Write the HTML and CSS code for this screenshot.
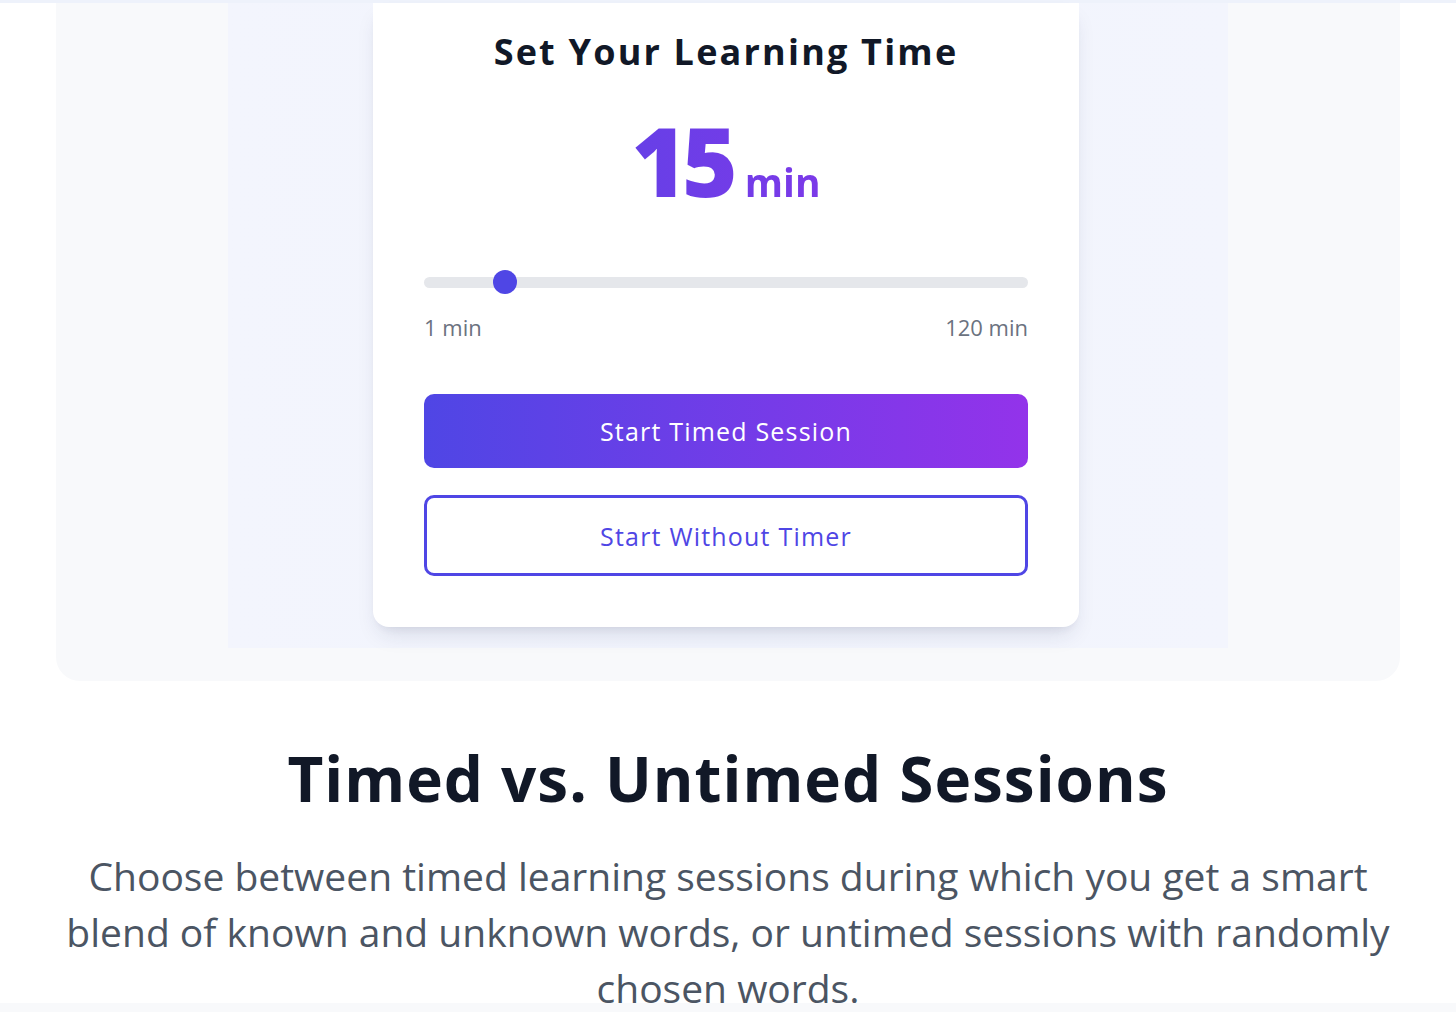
FILE: index.html
```html
<!DOCTYPE html>
<html lang="en">

<head>
    <meta charset="UTF-8">
    <meta name="viewport" content="width=device-width, initial-scale=1.0">
    <title>Learning Time</title>
    <link rel="stylesheet" href="styles.css">
</head>

<body>
    <div class="top-edge"></div>

    <!-- app preview -->
    <div class="preview">
        <div class="glow">
            <div class="card">
                <h2 class="card-title">Set Your Learning Time</h2>
                <div class="amount">15<span class="unit">min</span></div>

                <div class="slider">
                    <div class="track"></div>
                    <div class="thumb" style="left: 69px"></div>
                </div>
                <div class="range">
                    <span>1 min</span>
                    <span>120 min</span>
                </div>

                <button class="btn btn-timed">Start Timed Session</button>
                <button class="btn btn-free">Start Without Timer</button>
            </div>
        </div>
    </div>

    <div class="about">
        <h1>Timed vs. Untimed Sessions</h1>
        <p>Choose between timed learning sessions during which you get a smart blend of known and unknown words, or untimed sessions with randomly chosen words.</p>
    </div>

    <div class="bottom-edge"></div>
</body>

</html>
```

FILE: styles.css
```css
* {
    margin: 0;
    padding: 0;
    box-sizing: border-box;
}

body {
    font-family: "Open Sans", "Liberation Sans", sans-serif;
    background-color: #fff;
    color: #111827;
}

.top-edge {
    height: 3px;
    background-color: #eef2fb;
}

.preview {
    margin: 0 56px;
    padding-bottom: 33px;
    background-color: #f8f9fb;
    border-radius: 0 0 24px 24px;
}

.glow {
    width: 1000px;
    margin: 0 auto;
    padding-bottom: 21px;
    display: flex;
    justify-content: center;
    background: linear-gradient(to right, #f3f5fd, #f1f4fd 50%, #f3f5fd);
}

.card {
    width: 706px;
    margin-right: 4px;
    padding: 28px 51px 51px;
    background-color: #fff;
    border-radius: 0 0 16px 16px;
    box-shadow: 0 12px 22px -6px rgba(30, 41, 80, 0.13), 0 6px 10px -6px rgba(30, 41, 80, 0.1);
}

.card-title {
    font-size: 36px;
    line-height: 42px;
    font-weight: 700;
    letter-spacing: 2.2px;
    text-align: center;
    color: #111827;
}

.amount {
    margin-top: 40px;
    font-size: 95px;
    line-height: 95px;
    font-weight: 800;
    letter-spacing: -5px;
    text-align: center;
    background: linear-gradient(to right, #4f46e5, #9333ea);
    -webkit-background-clip: text;
    background-clip: text;
    color: transparent;
}

.unit {
    margin-left: 12px;
    font-size: 39px;
    font-weight: 700;
    letter-spacing: 0;
}

.slider {
    position: relative;
    height: 24px;
    margin-top: 41px;
    display: flex;
    align-items: center;
}

.track {
    width: 100%;
    height: 11px;
    border-radius: 6px;
    background-color: #e5e7eb;
}

.thumb {
    position: absolute;
    top: 0;
    width: 24px;
    height: 24px;
    border-radius: 50%;
    background-color: #4f46e5;
}

.range {
    margin-top: 19px;
    display: flex;
    justify-content: space-between;
    font-size: 22px;
    line-height: 28px;
    color: #6b7280;
}

.btn {
    display: block;
    width: 100%;
    font-family: inherit;
    font-size: 25px;
    font-weight: 500;
    letter-spacing: 1.2px;
    border-radius: 10px;
    cursor: pointer;
}

.btn-timed {
    height: 74px;
    margin-top: 53px;
    border: none;
    color: #fff;
    background: linear-gradient(to right, #4f46e5, #9333ea);
}

.btn-free {
    height: 81px;
    margin-top: 27px;
    border: 3px solid #4f46e5;
    color: #4f46e5;
    background-color: #fff;
}

.about {
    margin-top: 60px;
    text-align: center;
}

.about h1 {
    font-size: 62px;
    line-height: 74px;
    font-weight: 700;
    letter-spacing: 1px;
    color: #111827;
}

.about p {
    max-width: 1360px;
    margin: 33px auto 0;
    font-size: 39px;
    line-height: 56px;
    color: #4b5563;
}

.bottom-edge {
    position: fixed;
    left: 0;
    right: 0;
    bottom: 0;
    height: 9px;
    background-color: #f8f9fb;
}
```
